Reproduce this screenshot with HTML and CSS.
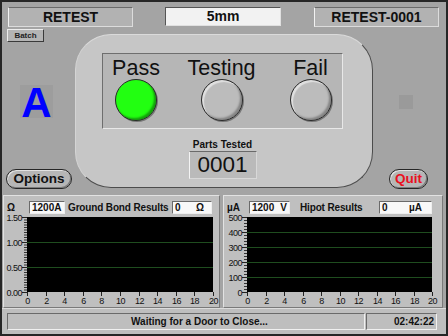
FILE: index.html
```html
<!DOCTYPE html>
<html lang="en">
<head>
  <meta charset="UTF-8" />
  <title>Retest</title>
  <link rel="stylesheet" href="styles.css">
</head>
<body>
  <div id="window">
    <div class="topbar">
      <div class="field field-mode">RETEST</div>
      <div class="field field-size">5mm</div>
      <div class="field field-serial">RETEST-0001</div>
    </div>

    <div class="middle">
      <div class="side">
        <div class="batch">Batch</div>
        <div class="station">A</div>
        <div class="pill options">Options</div>
      </div>

      <div class="panel">
        <div class="lights">
          <div class="light"><span>Pass</span><div class="lamp lamp-on"></div></div>
          <div class="light"><span>Testing</span><div class="lamp"></div></div>
          <div class="light light-fail"><span>Fail</span><div class="lamp"></div></div>
        </div>
        <div class="counter">
          <span class="counter-label">Parts Tested</span>
          <div class="counter-value">0001</div>
        </div>
      </div>

      <div class="side">
        <div class="indicator"></div>
        <div class="pill quit">Quit</div>
      </div>
    </div>

    <div class="charts">
      <div class="chart-panel chart-left">
        <div class="chart-head">
          <span class="unit">&Omega;</span>
          <span class="setting setting-a">1200A</span>
          <span class="title title-gb">Ground Bond Results</span>
          <span class="setting reading reading-gb"><span>0</span><span>&Omega;</span></span>
        </div>
        <svg id="chart_gb" class="plot-svg" width="215" height="91"></svg>
      </div>
      <div class="chart-panel chart-right">
        <div class="chart-head">
          <span class="unit">&micro;A</span>
          <span class="setting setting-v"><span>1200</span><span>V</span></span>
          <span class="title title-hp">Hipot Results</span>
          <span class="setting reading reading-hp"><span>0</span><span>&micro;A</span></span>
        </div>
        <svg id="chart_hp" class="plot-svg" width="218" height="91"></svg>
      </div>
    </div>

    <div class="status">
      <div class="status-box status-msg">Waiting for a Door to Close...</div>
      <div class="status-box status-time">02:42:22</div>
    </div>
  </div>

  <script>
    const NS = 'http://www.w3.org/2000/svg';

    function el(name, attrs, text) {
      const e = document.createElementNS(NS, name);
      for (const k in attrs) e.setAttribute(k, attrs[k]);
      if (text !== undefined) e.textContent = text;
      return e;
    }

    // draws a black plot with green grid, y labels from top to bottom
    function drawChart(id, yLabels, plotWidth, minorDash) {
      const svg = document.getElementById(id);
      const left = 23, top = 1, bottom = 76;
      const right = left + plotWidth;
      const step = (bottom - top) / (yLabels.length - 1);

      svg.append(el('rect', { x: left, y: top, width: plotWidth, height: bottom - top, class: 'plot' }));
      svg.append(el('line', { x1: left - 1.5, x2: left - 1.5, y1: top, y2: bottom, class: 'minor', 'stroke-dasharray': minorDash }));

      yLabels.forEach((label, i) => {
        const y = Math.round(top + i * step);
        if (i > 0 && i < yLabels.length - 1) {
          svg.append(el('line', { x1: left, x2: right, y1: y + 0.5, y2: y + 0.5, class: 'grid' }));
        }
        svg.append(el('line', { x1: left - 5, x2: left, y1: y + 0.5, y2: y + 0.5, class: 'tick' }));
        svg.append(el('text', { x: left - 5, y: y + 3.5, class: 'ylabel' }, label));
      });

      for (let i = 0; i <= 10; i++) {
        const x = Math.round(left + i * plotWidth / 10);
        svg.append(el('line', { x1: x + 0.5, x2: x + 0.5, y1: bottom, y2: bottom + 4, class: 'tick' }));
        svg.append(el('text', { x: x + 0.5, y: 88, class: 'xlabel' }, String(i * 2)));
      }
    }

    drawChart('chart_gb', ['1.50', '1.00', '0.50', '0.00'], 186, '1 1.5');
    drawChart('chart_hp', ['500', '400', '300', '200', '100', '0'], 185, '1 2');
  </script>
</body>
</html>
```

FILE: styles.css
```css
* {
  box-sizing: border-box;
}

body {
  margin: 0;
  background-color: #a4a4a4;
  font-family: 'Liberation Sans', Arial, sans-serif;
  color: #111;
}

#window {
  width: 448px;
  height: 336px;
  border: 2px solid #262626;
  background-color: #a4a4a4;
  display: flex;
  flex-direction: column;
}

/* top row */

.topbar {
  height: 26px;
  display: flex;
  align-items: flex-start;
  padding: 5px 0 0 6px;
}

.field {
  height: 20px;
  border: 1px solid;
  border-color: #6a6a6a #dcdcdc #dcdcdc #f2f2f2;
  background-color: #b2b2b2;
  font-size: 14px;
  font-weight: bold;
  line-height: 18px;
  text-align: center;
}

.field-mode {
  width: 125px;
}

.field-size {
  width: 116px;
  height: 19px;
  margin-left: 32px;
  border-color: #555 #e0e0e0 #e0e0e0 #555;
  background-color: #f2f2f2;
  line-height: 17px;
}

.field-serial {
  width: 125px;
  margin-left: 33px;
}

/* middle */

.middle {
  height: 164px;
  display: flex;
}

.side {
  width: 73px;
  display: flex;
  flex-direction: column;
  align-items: flex-start;
}

.batch {
  margin: 1px 0 0 5px;
  width: 37px;
  height: 13px;
  border: 1px solid;
  border-color: #ececec #3a3a3a #3a3a3a #ececec;
  background-color: #b4b4b4;
  font-size: 8px;
  font-weight: bold;
  line-height: 11px;
  text-align: center;
  color: #222;
}

.station {
  margin: 43px 0 0 18px;
  width: 33px;
  height: 33px;
  background-color: #9d9d9d;
  color: #0000ff;
  font-size: 42px;
  font-weight: bold;
  line-height: 36px;
  text-align: center;
}

.indicator {
  margin: 67px 0 0 26px;
  width: 14px;
  height: 14px;
  background-color: #9a9a9a;
}

.pill {
  height: 20px;
  border: 1px solid #262626;
  border-radius: 10px;
  background-color: #b6b6b6;
  box-shadow: inset 1px 1px 0 #e2e2e2, inset -1px -1px 0 #7c7c7c;
  font-size: 13.5px;
  font-weight: bold;
  line-height: 18px;
  text-align: center;
}

.options {
  margin: 51px 0 0 4px;
  width: 66px;
}

.quit {
  margin: 60px 0 0 16px;
  width: 39px;
  color: #ea1020;
}

.panel {
  width: 298px;
  height: 154px;
  margin-top: 6px;
  border: 1px solid;
  border-color: #dadada #4c4c4c #4c4c4c #d4d4d4;
  border-radius: 36px;
  background-color: #c6c6c6;
  padding: 18px 0 0 26px;
  display: flex;
  flex-direction: column;
}

.lights {
  width: 241px;
  height: 76px;
  border: 1px solid;
  border-color: #6e6e6e #e8e8e8 #e8e8e8 #6e6e6e;
  background-color: #b6b6b6;
  display: grid;
  grid-template-columns: 66px 105px 68px;
}

.light {
  display: flex;
  flex-direction: column;
  align-items: center;
  padding-top: 3px;
}

.light-fail {
  padding-left: 5px;
}

.light span {
  font-size: 21.5px;
  line-height: 22px;
}

.lamp {
  width: 42px;
  height: 42px;
  border-radius: 50%;
  border: 1px solid #2a2a2a;
  background-color: #bcbcbc;
  box-shadow: inset 2px 2px 1px #e0e0e0, inset -2px -2px 2px #858585, 1px 1px 0 #777;
}

.lamp-on {
  background-color: #22ff11;
  box-shadow: inset -2px -2px 2px #14a00c, 1px 1px 0 #777;
}

.counter {
  width: 241px;
  display: flex;
  flex-direction: column;
  align-items: center;
  padding-top: 10px;
}

.counter-label {
  font-size: 10px;
  font-weight: bold;
  line-height: 12px;
}

.counter-value {
  width: 68px;
  height: 28px;
  border: 1px solid;
  border-color: #6a6a6a #d8d8d8 #d8d8d8 #f4f4f4;
  background-color: #bababa;
  font-size: 22.5px;
  line-height: 26px;
  text-align: center;
}

/* charts */

.charts {
  height: 116px;
  display: flex;
  gap: 3px;
  padding: 3px 0 0 1px;
}

.chart-panel {
  height: 113px;
  border: 1px solid;
  border-color: #e2e2e2 #7a7a7a #7a7a7a #e2e2e2;
  background-color: #bfbfbf;
  display: flex;
  flex-direction: column;
}

.chart-left {
  width: 217px;
}

.chart-right {
  width: 220px;
}

.chart-head {
  height: 20px;
  display: flex;
  align-items: flex-start;
  padding-top: 5px;
  font-size: 10px;
  font-weight: bold;
}

.unit {
  width: 25px;
  padding-left: 3px;
  line-height: 13px;
}

.setting {
  height: 13px;
  border: 1px solid;
  border-color: #6a6a6a #eeeeee #eeeeee #6a6a6a;
  background-color: #f8f8f8;
  line-height: 11px;
  padding: 0 2px;
  display: flex;
  justify-content: space-between;
}

.setting-a {
  width: 36px;
}

.setting-v {
  width: 41px;
}

.title {
  line-height: 13px;
  white-space: nowrap;
  letter-spacing: -0.15px;
}

.title-gb {
  width: 100px;
  margin-left: 3px;
}

.title-hp {
  width: 64px;
  margin-left: 10px;
}

.reading-gb {
  width: 40px;
  margin-left: 4px;
  padding-right: 7px;
}

.reading-hp {
  width: 53px;
  margin-left: 15px;
  padding-right: 9px;
}

.plot-svg {
  display: block;
  overflow: visible;
}

.plot-svg .plot {
  fill: #000;
}

.plot-svg .grid {
  stroke: #1f4d1f;
  stroke-width: 1;
}

.plot-svg .tick {
  stroke: #222;
  stroke-width: 1;
}

.plot-svg .minor {
  stroke: #333;
  stroke-width: 3;
}

.plot-svg text {
  font-family: 'Liberation Sans', Arial, sans-serif;
  font-size: 9px;
  letter-spacing: -0.5px;
  fill: #111;
}

.plot-svg .ylabel {
  text-anchor: end;
}

.plot-svg .xlabel {
  text-anchor: middle;
}

/* status bar */

.status {
  height: 26px;
  border-top: 1px solid #dcdcdc;
  background-color: #bebebe;
  display: flex;
  padding: 4px 0 0 5px;
  font-size: 10px;
  font-weight: bold;
}

.status-box {
  height: 17px;
  border: 1px solid;
  border-color: #6a6a6a #f0f0f0 #f0f0f0 #6a6a6a;
  line-height: 14px;
  padding-top: 1px;
}

.status-msg {
  width: 358px;
  padding-left: 123px;
}

.status-time {
  width: 71px;
  margin-left: 1px;
  text-align: right;
  padding-right: 2px;
}
```
